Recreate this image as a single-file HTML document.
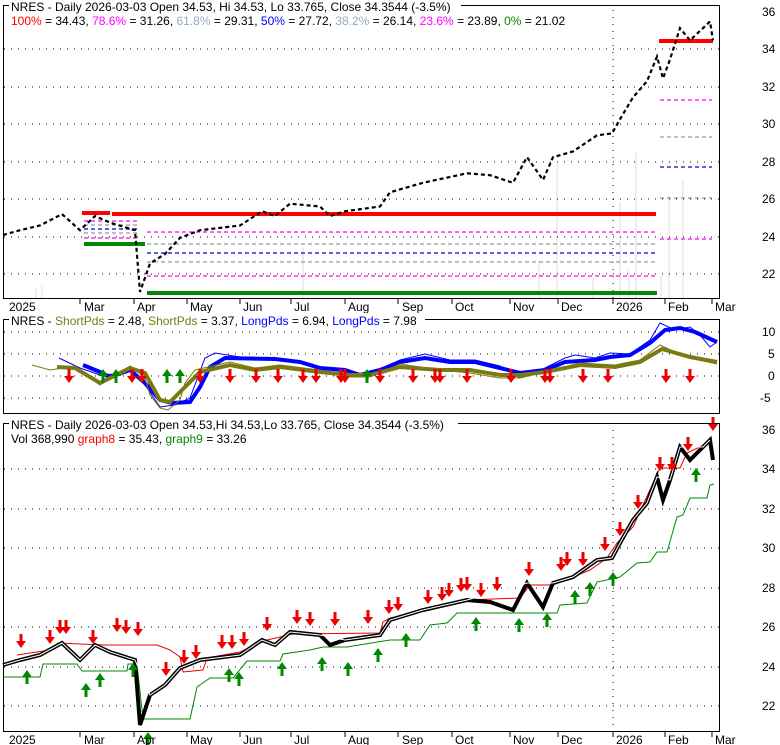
<!DOCTYPE html>
<html><head><meta charset="utf-8"><style>
html,body{margin:0;padding:0;background:#fff;}
svg{display:block;font-family:"Liberation Sans",Arial,sans-serif;font-size:12px;}
</style></head><body>
<svg width="780" height="745" viewBox="0 0 780 745" xmlns="http://www.w3.org/2000/svg">
<defs>
<g id="dn"><rect x="-1.5" y="0" width="3" height="8" fill="#e00"/><polygon points="-5,7 5,7 0,14" fill="#e00"/></g>
<g id="up"><rect x="-1.5" y="6" width="3" height="8" fill="#080"/><polygon points="-5,7 5,7 0,0" fill="#080"/></g>
</defs>

<!-- ================= TOP PANEL ================= -->
<g fill="#eee">
<rect x="302" y="247" width="2" height="51"/><rect x="538" y="260" width="2" height="38"/>
<rect x="556" y="163" width="2" height="135"/><rect x="592" y="277" width="2" height="21"/>
<rect x="619" y="202" width="2" height="96"/><rect x="628" y="270" width="2" height="28"/>
<rect x="635" y="152" width="2" height="146"/><rect x="660" y="275" width="2" height="23"/>
<rect x="668" y="195" width="2" height="103"/><rect x="682" y="180" width="2" height="118"/>
<rect x="35" y="287" width="2" height="11"/><rect x="41" y="286" width="2" height="12"/>
</g>
<g stroke="#000" stroke-width="1" stroke-dasharray="1 6">
<line x1="4" y1="49" x2="719" y2="49"/><line x1="4" y1="87" x2="719" y2="87"/>
<line x1="4" y1="124" x2="719" y2="124"/><line x1="4" y1="162" x2="719" y2="162"/>
<line x1="4" y1="199" x2="719" y2="199"/><line x1="4" y1="237" x2="719" y2="237"/>
<line x1="4" y1="274" x2="719" y2="274"/><line x1="613" y1="10" x2="613" y2="298"/>
</g>
<!-- fib levels -->
<g stroke-width="1.2" stroke-dasharray="4 3" fill="none">
<line x1="84" y1="221" x2="140" y2="221" stroke="#f0f"/>
<line x1="84" y1="225" x2="140" y2="225" stroke="#999"/>
<line x1="84" y1="229" x2="140" y2="229" stroke="#00c"/>
<line x1="84" y1="233" x2="140" y2="233" stroke="#999"/>
<line x1="84" y1="238" x2="140" y2="238" stroke="#f0f"/>
<line x1="147" y1="232" x2="656" y2="232" stroke="#f0f"/>
<line x1="147" y1="244" x2="656" y2="244" stroke="#999"/>
<line x1="147" y1="253" x2="656" y2="253" stroke="#00c"/>
<line x1="147" y1="262" x2="656" y2="262" stroke="#999"/>
<line x1="147" y1="276" x2="656" y2="276" stroke="#f0f"/>
<line x1="660" y1="100" x2="712" y2="100" stroke="#f0f"/>
<line x1="660" y1="137" x2="712" y2="137" stroke="#999"/>
<line x1="660" y1="167" x2="712" y2="167" stroke="#00c"/>
<line x1="660" y1="198" x2="712" y2="198" stroke="#999"/>
<line x1="660" y1="239" x2="712" y2="239" stroke="#f0f"/>
</g>
<g stroke-width="4">
<line x1="82" y1="213" x2="110" y2="213" stroke="#f00"/>
<line x1="112" y1="214" x2="656" y2="214" stroke="#f00"/>
<line x1="659" y1="41" x2="713" y2="41" stroke="#f00"/>
<line x1="84" y1="244" x2="145" y2="244" stroke="#080"/>
<line x1="147" y1="293" x2="657" y2="293" stroke="#080"/>
</g>
<g transform="translate(0,-396.1) scale(1,0.949)">
<polyline fill="none" stroke="#000" stroke-width="2.2" stroke-dasharray="4 3" vector-effect="non-scaling-stroke" points="3,665 20,660 40,655 62,643 80,660 95,645 110,652 135,660 140,725 150,695 165,685 180,668 200,660 240,655 262,640 275,645 290,632 320,635 330,645 345,640 380,635 390,620 423,610 467,600 490,602 513,610 527,583 543,607 553,583 573,577 597,560 612,558 620,543 633,520 647,503 657,477 663,500 670,480 680,447 690,460 703,447 710,440 713,460"/>
</g>
<rect x="3.5" y="5.5" width="716" height="293" fill="none" stroke="#000"/>
<rect x="9" y="0" width="452" height="13" fill="#fff"/>
<text x="11" y="11">NRES - Daily 2026-03-03 Open 34.53, Hi 34.53, Lo 33.765, Close 34.3544 (-3.5%)</text>
<text x="11" y="25"><tspan fill="#f00">100%</tspan> = 34.43, <tspan fill="#f0f">78.6%</tspan> = 31.26, <tspan fill="#9ab">61.8%</tspan> = 29.31, <tspan fill="#00f">50%</tspan> = 27.72, <tspan fill="#9ab">38.2%</tspan> = 26.14, <tspan fill="#f0f">23.6%</tspan> = 23.89, <tspan fill="#080">0%</tspan> = 21.02</text>
<g>
<text x="762" y="16">36</text><text x="762" y="53">34</text><text x="762" y="91">32</text>
<text x="762" y="128">30</text><text x="762" y="166">28</text><text x="762" y="203">26</text>
<text x="762" y="241">24</text><text x="762" y="278">22</text>
</g>
<g stroke="#000"><line x1="80" y1="299" x2="80" y2="304"/><line x1="134" y1="299" x2="134" y2="304"/><line x1="187" y1="299" x2="187" y2="304"/><line x1="240" y1="299" x2="240" y2="304"/><line x1="291" y1="299" x2="291" y2="304"/><line x1="345" y1="299" x2="345" y2="304"/><line x1="398" y1="299" x2="398" y2="304"/><line x1="452" y1="299" x2="452" y2="304"/><line x1="510" y1="299" x2="510" y2="304"/><line x1="558" y1="299" x2="558" y2="304"/><line x1="613" y1="299" x2="613" y2="304"/><line x1="665" y1="299" x2="665" y2="304"/><line x1="712" y1="299" x2="712" y2="304"/></g>
<g><text x="9" y="311">2025</text><text x="84" y="311">Mar</text><text x="137" y="311">Apr</text><text x="190" y="311">May</text><text x="243" y="311">Jun</text><text x="294" y="311">Jul</text><text x="348" y="311">Aug</text><text x="402" y="311">Sep</text><text x="455" y="311">Oct</text><text x="513" y="311">Nov</text><text x="561" y="311">Dec</text><text x="616" y="311">2026</text><text x="668" y="311">Feb</text><text x="715" y="311">Mar</text></g>

<!-- ================= MIDDLE PANEL ================= -->
<g stroke="#000" stroke-width="1" stroke-dasharray="1 6">
<line x1="4" y1="332" x2="719" y2="332"/><line x1="4" y1="354" x2="719" y2="354"/>
<line x1="4" y1="376" x2="719" y2="376"/><line x1="4" y1="398" x2="719" y2="398"/>
</g>
<polyline fill="none" stroke="#00f" stroke-width="1" points="59,358 80,368 100,375 115,374 130,370 145,385 160,407 175,405 190,398 205,358 215,353 240,357 275,359 300,361 320,367 345,371 360,376 380,369 400,360 425,354 450,360 475,360 500,366 520,378 545,368 565,358 575,355 595,358 610,353 630,354 650,340 660,323 675,330 690,327 700,335 710,347 717,342"/>
<polyline fill="none" stroke="#00f" stroke-width="4" points="83,365 100,372 110,377 130,370 145,383 160,400 172,403 190,402 200,387 210,367 225,358 275,359 300,362 320,368 345,370 360,375 380,370 400,362 425,358 450,362 475,362 500,368 520,373 545,370 565,362 595,360 610,357 630,355 650,343 665,330 680,328 695,332 717,342"/>
<polyline fill="none" stroke="#7a7a10" stroke-width="1" points="32,365 50,370 75,366 100,385 120,372 130,366 145,378 150,395 160,408 168,410 180,400 185,383 195,370 230,362 255,368 280,365 320,370 350,377 370,377 400,364 440,370 470,373 500,378 520,378 545,372 580,363 615,365 640,360 660,345 675,352 690,358 717,364"/>
<polyline fill="none" stroke="#7a7a10" stroke-width="4" points="57,367 75,368 100,383 130,368 145,373 160,400 170,402 185,387 200,372 230,365 255,370 280,367 320,372 350,375 370,375 400,367 440,370 470,370 500,375 520,375 545,372 580,365 615,367 640,362 662,349 690,357 717,362"/>
<g>
<use href="#dn" x="69" y="369"/><use href="#dn" x="132" y="369"/><use href="#dn" x="142" y="369"/><use href="#dn" x="200" y="369"/><use href="#dn" x="230" y="369"/><use href="#dn" x="256" y="369"/><use href="#dn" x="278" y="369"/><use href="#dn" x="303" y="369"/><use href="#dn" x="316" y="369"/><use href="#dn" x="341" y="369"/><use href="#dn" x="345" y="369"/><use href="#dn" x="380" y="369"/><use href="#dn" x="413" y="369"/><use href="#dn" x="435" y="369"/><use href="#dn" x="440" y="369"/><use href="#dn" x="467" y="369"/><use href="#dn" x="511" y="369"/><use href="#dn" x="545" y="369"/><use href="#dn" x="550" y="369"/><use href="#dn" x="583" y="369"/><use href="#dn" x="608" y="369"/><use href="#dn" x="666" y="369"/><use href="#dn" x="690" y="369"/>
<use href="#up" x="103" y="369"/><use href="#up" x="116" y="369"/><use href="#up" x="167" y="369"/><use href="#up" x="180" y="369"/><use href="#up" x="367" y="369"/>
</g>
<rect x="3.5" y="319.5" width="716" height="94" fill="none" stroke="#000"/>
<rect x="9" y="313" width="416" height="13" fill="#fff"/>
<text x="11" y="325">NRES - <tspan fill="#7a7a10">ShortPds</tspan> = 2.48, <tspan fill="#7a7a10">ShortPds</tspan> = 3.37, <tspan fill="#00f">LongPds</tspan> = 6.94, <tspan fill="#00f">LongPds</tspan> = 7.98</text>
<text x="762" y="336">10</text><text x="768" y="358">5</text><text x="768" y="380">0</text><text x="760" y="402">-5</text>

<!-- ================= BOTTOM PANEL ================= -->
<g stroke="#000" stroke-width="1" stroke-dasharray="1 6">
<line x1="4" y1="469" x2="719" y2="469"/><line x1="4" y1="509" x2="719" y2="509"/>
<line x1="4" y1="548" x2="719" y2="548"/><line x1="4" y1="588" x2="719" y2="588"/>
<line x1="4" y1="627" x2="719" y2="627"/><line x1="4" y1="667" x2="719" y2="667"/>
<line x1="4" y1="706" x2="719" y2="706"/><line x1="613" y1="430" x2="613" y2="731"/>
</g>
<polyline fill="none" stroke="#e00" stroke-width="1" points="17,655 50,650 58,643 103,645 157,645 170,650 180,657 183,672 203,670 207,658 240,652 267,640 293,634 380,633 383,622 390,618 430,610 467,600 520,598 530,585 553,585 590,570 607,558 617,543 633,527 643,505 660,468 680,468 687,453 710,442"/>
<polyline fill="none" stroke="#080" stroke-width="1" points="3,677 40,677 43,664 77,664 82,671 127,671 128,664 137,664 143,719 190,719 197,687 210,678 233,678 247,661 280,661 283,654 310,650 323,647 347,647 390,640 420,640 430,625 447,623 457,613 557,613 560,605 587,603 597,582 620,577 637,563 650,562 657,552 667,552 677,517 683,515 690,498 707,498 710,485 714,484"/>
<polyline fill="none" stroke="#000" stroke-width="4" stroke-linejoin="miter" points="3,665 20,660 40,655 62,643 80,660 95,645 110,652 135,660 140,725 150,695 165,685 180,668 200,660 240,655 262,640 275,645 290,632 320,635 330,645 345,640 380,635 390,620 423,610 467,600 490,602 513,610 527,583 543,607 553,583 573,577 597,560 612,558 620,543 633,520 647,503 657,477 663,500 670,480 680,447 690,460 703,447 710,440 713,460"/>
<polyline fill="none" stroke="#fff" stroke-width="1" points="3,665 20,660 40,655 62,643 80,660 95,645 110,652 135,660 150,695 165,685 180,668 200,660 240,655 262,640 275,645 290,632 320,635 345,640 380,635 390,620 423,610 467,600 527,583 553,583 573,577 597,560 612,558 620,543 633,520 647,503 657,477 670,480 680,447 703,447 710,440"/>
<g>
<use href="#dn" x="21" y="634"/><use href="#dn" x="50" y="630"/><use href="#dn" x="60" y="620"/><use href="#dn" x="66" y="620"/><use href="#dn" x="93" y="630"/><use href="#dn" x="117" y="618"/><use href="#dn" x="126" y="620"/><use href="#dn" x="138" y="622"/><use href="#dn" x="166" y="662"/><use href="#dn" x="184" y="650"/><use href="#dn" x="196" y="645"/><use href="#dn" x="222" y="635"/><use href="#dn" x="232" y="635"/><use href="#dn" x="244" y="632"/><use href="#dn" x="267" y="617"/><use href="#dn" x="297" y="610"/><use href="#dn" x="310" y="612"/><use href="#dn" x="335" y="612"/><use href="#dn" x="368" y="610"/><use href="#dn" x="389" y="600"/><use href="#dn" x="398" y="597"/><use href="#dn" x="428" y="590"/><use href="#dn" x="442" y="587"/><use href="#dn" x="449" y="583"/><use href="#dn" x="461" y="578"/><use href="#dn" x="467" y="577"/><use href="#dn" x="481" y="583"/><use href="#dn" x="497" y="577"/><use href="#dn" x="529" y="562"/><use href="#dn" x="561" y="557"/><use href="#dn" x="567" y="552"/><use href="#dn" x="583" y="552"/><use href="#dn" x="605" y="537"/><use href="#dn" x="620" y="522"/><use href="#dn" x="638" y="495"/><use href="#dn" x="660" y="457"/><use href="#dn" x="672" y="457"/><use href="#dn" x="688" y="437"/><use href="#dn" x="713" y="417"/>
<use href="#up" x="27" y="670"/><use href="#up" x="86" y="683"/><use href="#up" x="100" y="673"/><use href="#up" x="133" y="663"/><use href="#up" x="148" y="732"/><use href="#up" x="229" y="668"/><use href="#up" x="239" y="672"/><use href="#up" x="282" y="662"/><use href="#up" x="322" y="657"/><use href="#up" x="348" y="662"/><use href="#up" x="378" y="648"/><use href="#up" x="406" y="633"/><use href="#up" x="476" y="617"/><use href="#up" x="519" y="618"/><use href="#up" x="547" y="613"/><use href="#up" x="575" y="590"/><use href="#up" x="590" y="582"/><use href="#up" x="613" y="572"/><use href="#up" x="696" y="468"/>
</g>
<rect x="3.5" y="423.5" width="716" height="308" fill="none" stroke="#000"/>
<rect x="9" y="417" width="449" height="13" fill="#fff"/>
<text x="11" y="429">NRES - Daily 2026-03-03 Open 34.53,Hi 34.53,Lo 33.765, Close 34.3544 (-3.5%)</text>
<text x="11" y="443">Vol 368,990 <tspan fill="#f00">graph8</tspan> = 35.43, <tspan fill="#080">graph9</tspan> = 33.26</text>
<g>
<text x="762" y="434">36</text><text x="762" y="473">34</text><text x="762" y="513">32</text>
<text x="762" y="552">30</text><text x="762" y="592">28</text><text x="762" y="631">26</text>
<text x="762" y="671">24</text><text x="762" y="710">22</text>
</g>
<g stroke="#000"><line x1="80" y1="732" x2="80" y2="737"/><line x1="134" y1="732" x2="134" y2="737"/><line x1="187" y1="732" x2="187" y2="737"/><line x1="240" y1="732" x2="240" y2="737"/><line x1="291" y1="732" x2="291" y2="737"/><line x1="345" y1="732" x2="345" y2="737"/><line x1="398" y1="732" x2="398" y2="737"/><line x1="452" y1="732" x2="452" y2="737"/><line x1="510" y1="732" x2="510" y2="737"/><line x1="558" y1="732" x2="558" y2="737"/><line x1="613" y1="732" x2="613" y2="737"/><line x1="665" y1="732" x2="665" y2="737"/><line x1="712" y1="732" x2="712" y2="737"/></g>
<g><text x="9" y="744">2025</text><text x="84" y="744">Mar</text><text x="137" y="744">Apr</text><text x="190" y="744">May</text><text x="243" y="744">Jun</text><text x="294" y="744">Jul</text><text x="348" y="744">Aug</text><text x="402" y="744">Sep</text><text x="455" y="744">Oct</text><text x="513" y="744">Nov</text><text x="561" y="744">Dec</text><text x="616" y="744">2026</text><text x="668" y="744">Feb</text><text x="715" y="744">Mar</text></g>
</svg>
</body></html>
